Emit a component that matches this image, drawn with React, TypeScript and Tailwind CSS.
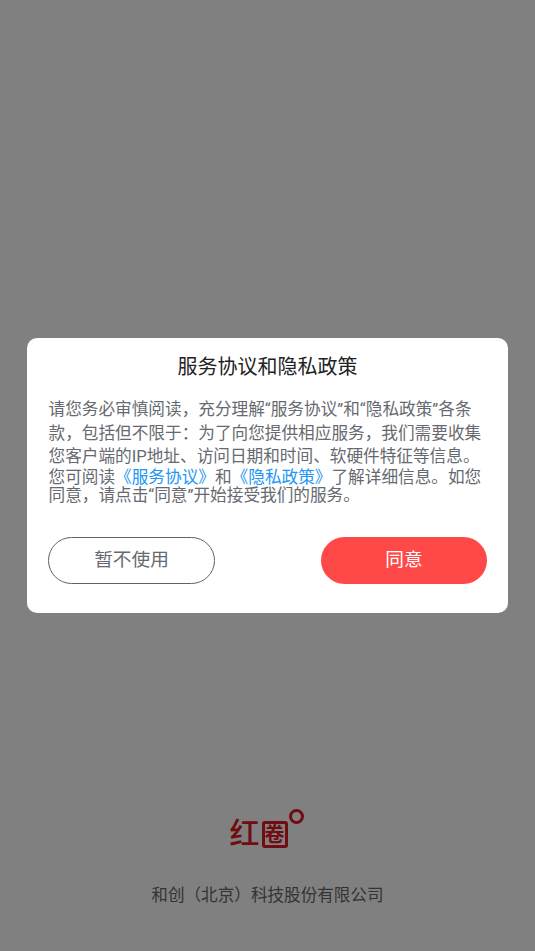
export default function App() {
  const link = "text-[#2196f3]";
  return (
    <div className="relative h-[951px] w-full bg-[#808080] font-['Roboto','Noto_Sans_CJK_SC',sans-serif] overflow-hidden flex flex-col items-center justify-end pb-[44px]">
      <div className="relative flex h-[40px] w-[76px] items-end justify-start pb-[2px] text-[#710c12]">
        <span className="text-[30px] leading-[28px] font-medium">红</span>
        <span className="ml-[2px] flex h-[27px] w-[26px] items-center justify-center rounded-[3px] border-[3px] border-[#710c12] text-[20px] leading-none font-bold">卷</span>
        <span className="absolute right-[1.5px] top-[-1px] h-[15px] w-[15px] rounded-full border-[3px] border-[#710c12]" />
      </div>
      <div className="mt-[35px] text-[16.6px] leading-[22px] text-[#333333] font-normal whitespace-nowrap">和创（北京）科技股份有限公司</div>

      <div className="absolute inset-0 flex items-center justify-center">
        <div className="flex h-[275px] w-[481px] flex-col rounded-[10px] bg-white pl-[21px] pr-[21px] pt-[15px]">
          <h1 className="text-center text-[20px] leading-[28px] font-normal text-[#222222]">服务协议和隐私政策</h1>
          <div className="mt-[17px] pl-[0.5px] text-[16.65px] font-normal text-[#666a70] whitespace-nowrap">
            <div className="leading-[24px]">请您务必审慎阅读，充分理解“服务协议”和“隐私政策”各条</div>
            <div className="leading-[24px]">款，包括但不限于：为了向您提供相应服务，我们需要收集</div>
            <div className="leading-[22px]">您客户端的IP地址、访问日期和时间、软硬件特征等信息。</div>
            <div className="leading-[20px]">您可阅读<span className={link}>《服务协议》</span>和<span className={link}>《隐私政策》</span>了解详细信息。如您</div>
            <div className="leading-[16px]">同意，请点击“同意”开始接受我们的服务。</div>
          </div>
          <div className="mt-[33px] flex items-center justify-between">
            <button className="h-[47px] w-[167px] rounded-full border border-[#5f6368] bg-white text-[18.7px] font-normal text-[#666a70]">暂不使用</button>
            <button className="h-[47px] w-[166px] rounded-full bg-[#ff4848] text-[18.7px] font-normal text-white">同意</button>
          </div>
        </div>
      </div>
    </div>
  );
}
